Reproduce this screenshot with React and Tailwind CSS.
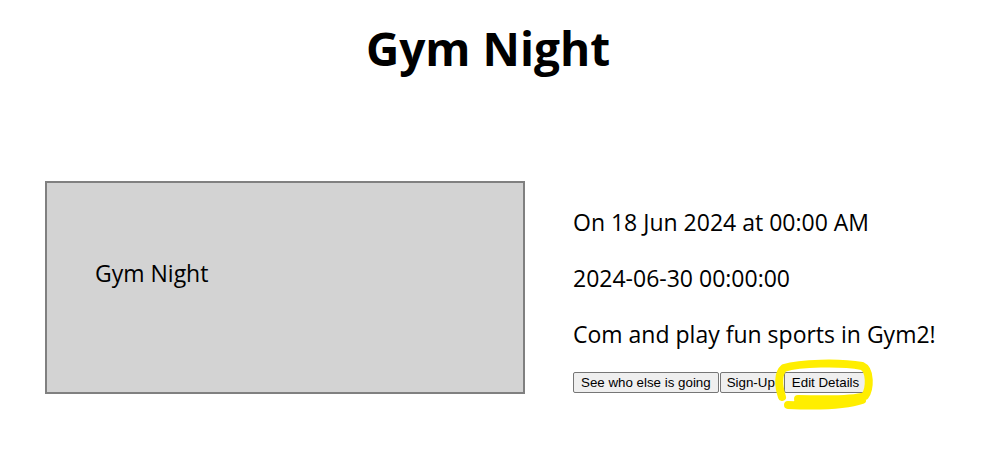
import React from 'react';

const ui = { fontFamily: '"Open Sans", "Noto Sans", sans-serif' };
const btn = { fontFamily: '"Liberation Sans", Arial, sans-serif' };

function Scribble() {
  return (
    <svg
      className="absolute left-[770px] top-[355px] pointer-events-none"
      width="110"
      height="60"
      viewBox="0 0 110 60"
      fill="none"
    >
      <path
        d="M12 42 C 8 30, 8 18, 14 13 C 30 8, 70 7, 92 11 C 101 15, 100 34, 95 41 C 80 46, 45 44, 28 44 M18 50 C 40 51, 75 51, 92 45"
        stroke="#ffee00"
        strokeWidth="8"
        strokeLinecap="round"
        strokeLinejoin="round"
      />
    </svg>
  );
}

export default function App() {
  return (
    <div className="relative w-full h-[471px] bg-white text-black overflow-hidden" style={ui}>
      {/* Title */}
      <h1 className="text-center pr-[26px] pt-[20px] text-[46px] font-bold leading-[56px]">
        Gym Night
      </h1>

      {/* Event row */}
      <div className="flex items-start gap-[48px] pl-[45px] mt-[105px]">
        <div className="w-[480px] h-[213px] shrink-0 border-2 border-[#808080] bg-[#d3d3d3] pl-[48px] pt-[75px]">
          <p className="text-[23px] leading-[30px]">Gym Night</p>
        </div>

        <div className="flex flex-col pt-[26px]">
          <p className="text-[23px] leading-[30px]">On 18 Jun 2024 at 00:00 AM</p>
          <p className="text-[23px] leading-[30px] mt-[26px]">2024-06-30 00:00:00</p>
          <p className="text-[23px] leading-[30px] mt-[26px]">Com and play fun sports in Gym2!</p>
          <div className="flex mt-[23px]" style={btn}>
            <button className="shrink-0 whitespace-nowrap h-[21px] px-[7px] text-[13.33px] leading-none border border-[#767676] rounded-[2px] bg-[#efefef]">
              See who else is going
            </button>
            <button className="shrink-0 whitespace-nowrap h-[21px] ml-[1px] px-[6px] text-[13.33px] leading-none border border-[#767676] rounded-[2px] bg-[#efefef]">
              Sign-Up
            </button>
            <button className="shrink-0 whitespace-nowrap h-[21px] ml-[2px] px-[7px] text-[13.33px] leading-none border border-[#767676] rounded-[2px] bg-[#efefef]">
              Edit Details
            </button>
          </div>
        </div>
      </div>

      <Scribble />
    </div>
  );
}
